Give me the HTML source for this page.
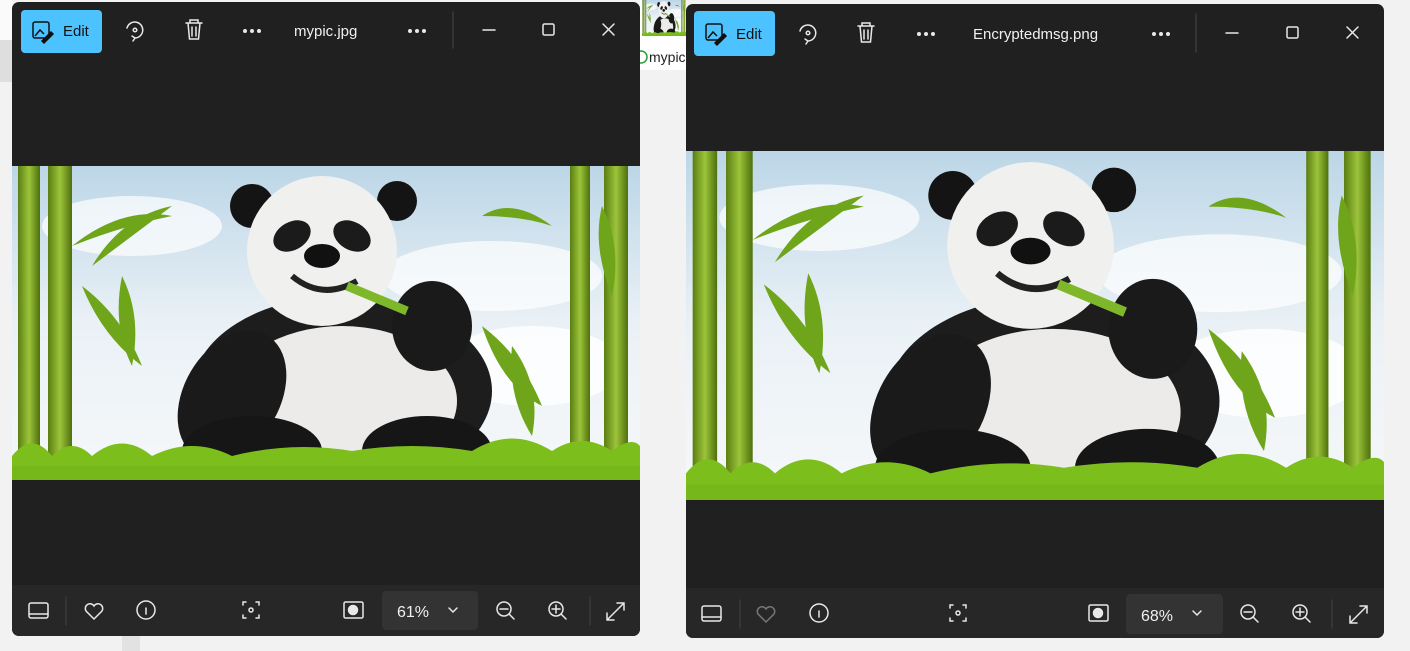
<!DOCTYPE html>
<html><head><meta charset="utf-8"><style>
html,body{margin:0;padding:0;background:#f2f2f2;width:1410px;height:651px;overflow:hidden;font-family:"Segoe UI","Liberation Sans",sans-serif}
</style></head><body>
<svg width="1410" height="651" viewBox="0 0 1410 651" xmlns="http://www.w3.org/2000/svg" style="position:absolute;left:0;top:0">
<defs>
<linearGradient id="sky" x1="0" y1="0" x2="0" y2="1"><stop offset="0" stop-color="#bcd6e7"/><stop offset="0.5" stop-color="#eaf1f6"/><stop offset="1" stop-color="#f6f8fa"/></linearGradient>
<linearGradient id="bam" x1="0" y1="0" x2="1" y2="0"><stop offset="0" stop-color="#5a7e12"/><stop offset="0.5" stop-color="#9cc43a"/><stop offset="1" stop-color="#4e700c"/></linearGradient>
<symbol id="scene" viewBox="0 0 628 314" preserveAspectRatio="none">
<rect width="628" height="314" fill="url(#sky)"/>
<ellipse cx="120" cy="60" rx="90" ry="30" fill="#fff" opacity=".7"/>
<ellipse cx="480" cy="110" rx="110" ry="35" fill="#fff" opacity=".7"/>
<ellipse cx="520" cy="200" rx="90" ry="40" fill="#fff" opacity=".8"/>
<g fill="url(#bam)">
<rect x="6" y="0" width="22" height="290"/><rect x="36" y="0" width="24" height="290"/>
<rect x="558" y="0" width="20" height="290"/><rect x="592" y="0" width="24" height="290"/>
</g>
<g fill="#6fa51a">
<path d="M60 80 q50 -40 100 -30 q-50 10 -100 30z"/><path d="M70 120 q40 30 60 80 q-40 -30 -60 -80z"/>
<path d="M80 100 q30 -50 80 -60 q-40 30 -80 60z"/><path d="M110 110 q20 40 10 90 q-20 -40 -10 -90z"/>
<path d="M540 60 q-40 -30 -70 -10 q40 0 70 10z"/><path d="M470 160 q40 30 60 80 q-40 -20 -60 -80z"/>
<path d="M500 180 q30 40 20 90 q-25 -40 -20 -90z"/><path d="M590 40 q-10 40 10 90 q10 -50 -10 -90z"/>
</g>
<ellipse cx="330" cy="225" rx="150" ry="95" fill="#1d1d1d"/>
<ellipse cx="330" cy="235" rx="115" ry="75" fill="#ecebe9"/>
<ellipse cx="220" cy="230" rx="48" ry="70" fill="#1a1a1a" transform="rotate(30 220 230)"/>
<ellipse cx="420" cy="160" rx="40" ry="45" fill="#1a1a1a"/>
<ellipse cx="240" cy="285" rx="70" ry="35" fill="#161616"/>
<ellipse cx="415" cy="285" rx="65" ry="35" fill="#161616"/>
<circle cx="240" cy="40" r="22" fill="#141414"/><circle cx="385" cy="35" r="20" fill="#141414"/>
<ellipse cx="310" cy="85" rx="75" ry="75" fill="#f0f0ef"/>
<ellipse cx="280" cy="70" rx="20" ry="14" fill="#1b1b1b" transform="rotate(-30 280 70)"/>
<ellipse cx="340" cy="70" rx="20" ry="14" fill="#1b1b1b" transform="rotate(30 340 70)"/>
<ellipse cx="310" cy="90" rx="18" ry="12" fill="#111"/>
<path d="M280 110 q30 25 65 5" stroke="#222" stroke-width="6" fill="none"/>
<path d="M335 120 l60 25" stroke="#7fb72a" stroke-width="9"/>
<path d="M0 290 q20 -25 40 0 q20 -20 40 0 q30 -25 60 0 q40 -20 80 0 q60 -15 120 -5 q60 -10 120 0 q40 -25 80 0 q30 -20 60 0 q20 -15 28 -5 v24 h-628z" fill="#7cbf1c"/>
<rect x="0" y="300" width="628" height="14" fill="#76b81a"/>
</symbol>
</defs>

<rect x="0" y="0" width="12" height="40" fill="#fafafa"/>
<rect x="0" y="40" width="12" height="42" fill="#dedede"/>
<rect x="640" y="0" width="46" height="70" fill="#fff"/>
<use href="#scene" x="642" y="0" width="44" height="36"/>
<circle cx="641" cy="57" r="6" fill="none" stroke="#2a9d3a" stroke-width="1.5"/>
<text x="649" y="62" font-size="14" fill="#222" font-family="Liberation Sans,sans-serif">mypic</text>
<rect x="122" y="636" width="18" height="15" fill="#e2e2e2"/>

<!-- LEFT WINDOW -->
<rect x="12" y="2" width="628" height="634" rx="7" fill="#202020"/>
<path d="M12 585 h628 v44 a7 7 0 0 1 -7 7 h-614 a7 7 0 0 1 -7 -7z" fill="#272727"/>
<use href="#scene" x="12" y="166" width="628" height="314"/>
<rect x="21" y="10" width="81" height="43" rx="4" fill="#4cc2ff"/>
<g fill="none" stroke="#111" stroke-width="1.5"><rect x="33" y="22" width="16" height="16" rx="2"/><path d="M35 36 l5 -6 4 4"/><path d="M42 41 l9 -9 2 2 -9 9z" fill="#111"/></g>
<text x="63" y="36" font-size="15" fill="#111" font-family="Liberation Sans,sans-serif">Edit</text>
<g fill="none" stroke="#e8e8e8" stroke-width="1.5" stroke-linecap="round">
<path d="M127 28 a8 8 0 1 1 8 10 l-2 3 m2 -3 l-3 -2"/><circle cx="135" cy="30" r="1.8"/>
<path d="M186 23 h16 M190 23 v-3 h8 v3 M188 23 l1.5 16 h9 l1.5 -16 M192 27 v9 M196 27 v9"/>
<line x1="453" y1="12" x2="453" y2="48" stroke="#3a3a3a"/>
<path d="M483 30 h12"/><rect x="543" y="24" width="11" height="11" rx="1.5"/><path d="M603 24 l11 11 M614 24 l-11 11"/>
</g>
<g fill="#e8e8e8"><circle cx="245" cy="31" r="2"/><circle cx="252" cy="31" r="2"/><circle cx="259" cy="31" r="2"/>
<circle cx="410" cy="31" r="2"/><circle cx="417" cy="31" r="2"/><circle cx="424" cy="31" r="2"/></g>
<text x="294" y="36" font-size="15" fill="#f0f0f0" font-family="Liberation Sans,sans-serif">mypic.jpg</text>
<rect x="382" y="591" width="96" height="39" rx="4" fill="#333"/>
<text x="397" y="617" font-size="16" fill="#f0f0f0" font-family="Liberation Sans,sans-serif">61%</text>
<g fill="none" stroke="#e8e8e8" stroke-width="1.5" stroke-linecap="round">
<path d="M449 608 l4 4 4 -4"/>
<rect x="29" y="603" width="19" height="15" rx="2"/><path d="M29 614 h19"/>
<line x1="66" y1="597" x2="66" y2="625" stroke="#3a3a3a"/>
<path d="M94 619 l-8 -8 a4.5 4.5 0 0 1 8 -5 a4.5 4.5 0 0 1 8 5 z"/>
<circle cx="146" cy="610" r="9"/><path d="M146 608 v6"/>
<path d="M243 605 v-3 h3 M256 602 h3 v3 M259 615 v3 h-3 M246 618 h-3 v-3"/><circle cx="251" cy="610" r="2"/>
<rect x="344" y="602" width="19" height="16" rx="1.5"/><circle cx="353" cy="610" r="4.5" fill="#e8e8e8"/>
<circle cx="504" cy="609" r="7"/><path d="M500 609 h8 M509 614 l5 5"/>
<circle cx="556" cy="609" r="7"/><path d="M552 609 h8 M556 605 v8 M561 614 l5 5"/>
<line x1="590" y1="597" x2="590" y2="625" stroke="#3a3a3a"/>
<path d="M607 620 l17 -17 M617 603 h7 v7 M607 613 v7 h7"/>
</g>

<!-- RIGHT WINDOW -->
<rect x="686" y="4" width="698" height="634" rx="7" fill="#202020"/>
<path d="M686 588 h698 v43 a7 7 0 0 1 -7 7 h-684 a7 7 0 0 1 -7 -7z" fill="#272727"/>
<use href="#scene" x="686" y="151" width="698" height="349"/>
<rect x="694" y="11" width="81" height="45" rx="4" fill="#4cc2ff"/>
<g fill="none" stroke="#111" stroke-width="1.5"><rect x="706" y="24" width="16" height="16" rx="2"/><path d="M708 38 l5 -6 4 4"/><path d="M715 43 l9 -9 2 2 -9 9z" fill="#111"/></g>
<text x="736" y="39" font-size="15" fill="#111" font-family="Liberation Sans,sans-serif">Edit</text>
<g fill="none" stroke="#e8e8e8" stroke-width="1.5" stroke-linecap="round">
<path d="M800 31 a8 8 0 1 1 8 10 l-2 3 m2 -3 l-3 -2"/><circle cx="808" cy="33" r="1.8"/>
<path d="M858 26 h16 M862 26 v-3 h8 v3 M860 26 l1.5 16 h9 l1.5 -16 M864 30 v9 M868 30 v9"/>
<line x1="1196" y1="14" x2="1196" y2="52" stroke="#3a3a3a"/>
<path d="M1226 33 h12"/><rect x="1287" y="27" width="11" height="11" rx="1.5"/><path d="M1347 27 l11 11 M1358 27 l-11 11"/>
</g>
<g fill="#e8e8e8"><circle cx="919" cy="34" r="2"/><circle cx="926" cy="34" r="2"/><circle cx="933" cy="34" r="2"/>
<circle cx="1154" cy="34" r="2"/><circle cx="1161" cy="34" r="2"/><circle cx="1168" cy="34" r="2"/></g>
<text x="973" y="39" font-size="15" fill="#f0f0f0" font-family="Liberation Sans,sans-serif">Encryptedmsg.png</text>
<rect x="1126" y="594" width="97" height="40" rx="4" fill="#333"/>
<text x="1141" y="621" font-size="16" fill="#f0f0f0" font-family="Liberation Sans,sans-serif">68%</text>
<g fill="none" stroke="#e8e8e8" stroke-width="1.5" stroke-linecap="round">
<path d="M1193 611 l4 4 4 -4"/>
<rect x="702" y="606" width="19" height="15" rx="2"/><path d="M702 617 h19"/>
<line x1="740" y1="600" x2="740" y2="628" stroke="#3a3a3a"/>
<path d="M766 622 l-8 -8 a4.5 4.5 0 0 1 8 -5 a4.5 4.5 0 0 1 8 5 z" stroke="#777"/>
<circle cx="819" cy="613" r="9"/><path d="M819 611 v6"/>
<path d="M950 608 v-3 h3 M963 605 h3 v3 M966 618 v3 h-3 M953 621 h-3 v-3"/><circle cx="958" cy="613" r="2"/>
<rect x="1089" y="605" width="19" height="16" rx="1.5"/><circle cx="1098" cy="613" r="4.5" fill="#e8e8e8"/>
<circle cx="1248" cy="612" r="7"/><path d="M1244 612 h8 M1253 617 l5 5"/>
<circle cx="1300" cy="612" r="7"/><path d="M1296 612 h8 M1300 608 v8 M1305 617 l5 5"/>
<line x1="1332" y1="600" x2="1332" y2="628" stroke="#3a3a3a"/>
<path d="M1350 623 l17 -17 M1360 606 h7 v7 M1350 616 v7 h7"/>
</g>
</svg>
</body></html>
